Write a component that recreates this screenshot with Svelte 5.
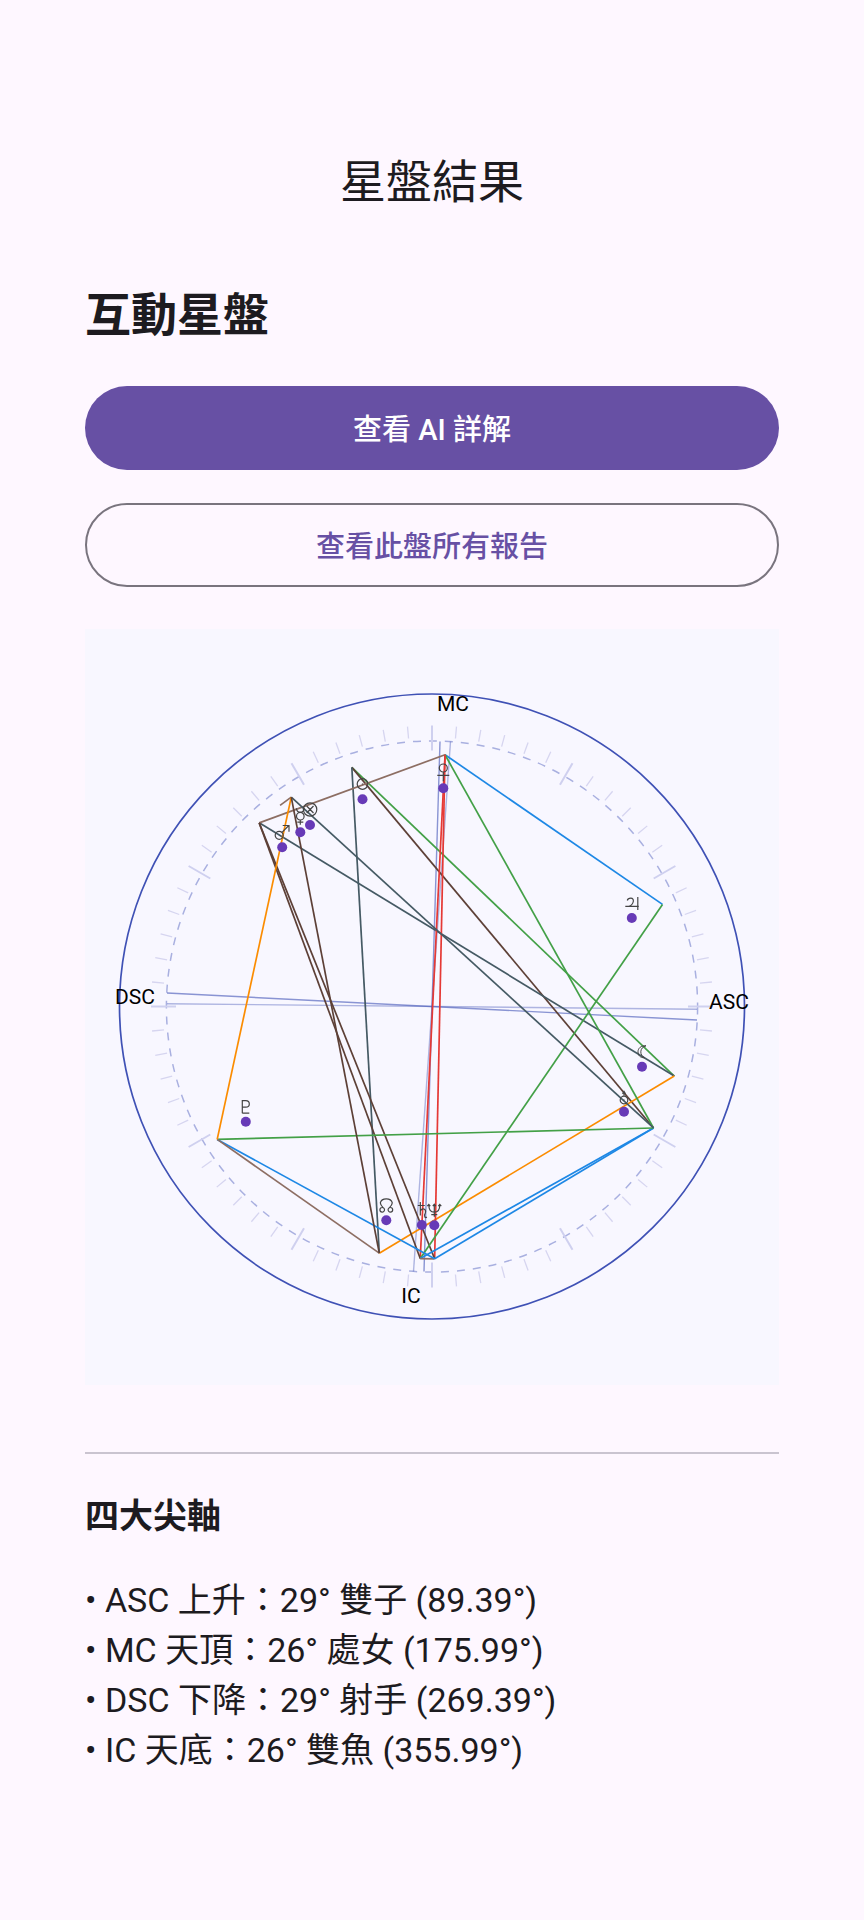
<script>
  const OUTER = 312.5;
  const INNER = 265.6;
  const VERTEX_SCALE = 252.3 / 218.7;

  const planets = {
    sun: { name: '太陽', x: -69.5, y: -207.3 },
    moon: { name: '月亮', x: 210, y: 60.3 },
    mercury: { name: '水星', x: -131.7, y: -174.3 },
    venus: { name: '金星', x: 11.3, y: -218.2 },
    mars: { name: '火星', x: -149.8, y: -159.2 },
    jupiter: { name: '木星', x: 199.8, y: -88.5 },
    saturn: { name: '土星', x: -10.2, y: 218.5 },
    uranus: { name: '天王星', x: 192, y: 105.3 },
    neptune: { name: '海王星', x: 2.3, y: 218.7 },
    pluto: { name: '冥王星', x: -186.2, y: 115.2 },
    node: { name: '北交點', x: -45.7, y: 213.8 },
    fortune: { name: '福點', x: -122, y: -181.5 }
  };

  // Glyph strokes, drawn relative to each planet's dot.
  const glyphs = {
    sun: 'M5.3-15.2A5.3 5.3 0 1 1-5.3-15.2A5.3 5.3 0 1 1 5.3-15.2M-.6-15.2H.6',
    moon: 'M4-21C-1-21.500-4-18.500-4-15C-4-11.500-2-9 2.500-9C0-10.500-1.200-12.500-1.200-15C-1.200-18 1-20.200 4-21Z',
    mercury: 'M-4-24Q-3.500-20 0-20Q3.500-20 4-24M3.800-16A3.800 3.800 0 1 1-3.800-16A3.800 3.800 0 1 1 3.800-16M0-12V-7.500M-3-10H3',
    venus: 'M4-20.300A4 4 0 1 1-4-20.300A4 4 0 1 1 4-20.300M0-16.300V-7M-6-13H6',
    mars: 'M1-12A4 4 0 1 1-7-12A4 4 0 1 1 1-12M-.2-15L6.600-21.800M.5-21.800H6.800V-15.500',
    jupiter: 'M6-21V-8M-6.500-11.700H7M-4.500-17.500Q-4-19.800-1-19.800Q2-19.800 1.500-16.500Q.8-13-3-11.700',
    saturn: 'M-4-19.500H3M-1.500-23V-9.500M-1.500-14Q0-16.500 2.200-16Q4.500-15 3.500-12Q2-9.500 3-8Q4-7 5-8',
    uranus: 'M3.800-11.800A3.800 3.800 0 1 1-3.800-11.800A3.800 3.800 0 1 1 3.800-11.800M-.6-11.800H.6M0-15.600V-20.500M-1.500-18L0-20.500L1.500-18',
    neptune: 'M-5.500-20.500Q-5.500-13 0-13Q5.500-13 5.500-20.500M0-21V-8.500M-3-10.500H3M-7-19L-5.500-20.700L-4-19M4-19L5.500-20.700L7-19M-1.500-19L0-21L1.500-19',
    pluto: 'M-3.500-8.500V-21H0Q3.500-21 3.500-17.700Q3.500-14.500 0-14.500H-3.500M-3.500-8.500H3.500',
    node: 'M-1.800-10.500A2.300 2.300 0 1 1-6.400-10.500A2.300 2.300 0 1 1-1.800-10.500M6.400-10.500A2.300 2.300 0 1 1 1.800-10.500A2.300 2.300 0 1 1 6.400-10.500M-3-12.500Q-6-15.500-6-17.500Q-5-21.500 0-21.500Q5-21.500 6-17.500Q6-15.500 3-12.500',
    fortune: 'M6.800-15.500A6.700 6.700 0 1 1-6.600-15.500A6.700 6.700 0 1 1 6.800-15.500M-3.300-19L3.500-12M3.500-19L-3.300-12'
  };

  const colors = {
    conjunction: '#8d6e63',
    semisextile: '#fb8c00',
    trine: '#43a047',
    sextile: '#1e88e5',
    quincunx: '#5d4037',
    minor: '#455a64',
    opposition: '#e53935'
  };

  const aspects = [
    ['sun', 'moon', 'trine'],
    ['sun', 'uranus', 'quincunx'],
    ['sun', 'node', 'minor'],
    ['mars', 'moon', 'minor'],
    ['moon', 'node', 'semisextile'],
    ['mercury', 'fortune', 'conjunction'],
    ['mars', 'venus', 'conjunction'],
    ['venus', 'jupiter', 'sextile'],
    ['venus', 'saturn', 'opposition'],
    ['venus', 'uranus', 'trine'],
    ['venus', 'neptune', 'opposition'],
    ['mars', 'saturn', 'quincunx'],
    ['mars', 'neptune', 'quincunx'],
    ['jupiter', 'saturn', 'trine'],
    ['uranus', 'saturn', 'sextile'],
    ['saturn', 'neptune', 'conjunction'],
    ['uranus', 'neptune', 'sextile'],
    ['uranus', 'pluto', 'trine'],
    ['fortune', 'uranus', 'minor'],
    ['neptune', 'pluto', 'sextile'],
    ['pluto', 'node', 'conjunction'],
    ['fortune', 'pluto', 'semisextile'],
    ['fortune', 'node', 'quincunx']
  ].map(([a, b, kind]) => ({
    x1: planets[a].x * VERTEX_SCALE,
    y1: planets[a].y * VERTEX_SCALE,
    x2: planets[b].x * VERTEX_SCALE,
    y2: planets[b].y * VERTEX_SCALE,
    color: colors[kind]
  }));

  const ticks = Array.from({ length: 72 }, (_, i) => {
    const angle = (i * 5 * Math.PI) / 180;
    const major = i % 6 === 0;
    const from = major ? 256 : 269;
    return {
      major,
      x1: Math.cos(angle) * from,
      y1: Math.sin(angle) * from,
      x2: Math.cos(angle) * 281,
      y2: Math.sin(angle) * 281
    };
  });

  const angles = [
    { code: 'ASC', name: '上升', sign: '29° 雙子', degree: '89.39°' },
    { code: 'MC', name: '天頂', sign: '26° 處女', degree: '175.99°' },
    { code: 'DSC', name: '下降', sign: '29° 射手', degree: '269.39°' },
    { code: 'IC', name: '天底', sign: '26° 雙魚', degree: '355.99°' }
  ];
</script>

<div class="page" lang="zh-Hant">
  <header><h1>星盤結果</h1></header>
  <main>
    <h2>互動星盤</h2>
    <div class="actions">
      <button class="filled" type="button">查看 AI 詳解</button>
      <button class="outlined" type="button">查看此盤所有報告</button>
    </div>

    <div class="chart">
      <svg viewBox="-347 -377.5 694 756" role="img" aria-label="星盤">
        <circle class="outer" r={OUTER} />
        <circle class="inner" r={INNER} />
        {#each ticks as t}
          <line class="tick" class:major={t.major} x1={t.x1} y1={t.y1} x2={t.x2} y2={t.y2} />
        {/each}
        <g class="axes">
          <line x1="-265" y1="-13.500" x2="265" y2="13.500" />
          <line x1="8" y1="-265" x2="-8" y2="265" />
          <line class="faint" x1="-265" y1="-2.800" x2="265" y2="2.800" />
          <line class="faint" x1="18.500" y1="-265" x2="-18.500" y2="265" />
        </g>
        <g class="aspects">
          {#each aspects as a}
            <line x1={a.x1} y1={a.y1} x2={a.x2} y2={a.y2} stroke={a.color} />
          {/each}
        </g>
        {#each Object.entries(planets) as [id, p]}
          <g transform="translate({p.x} {p.y})" role="img" aria-label={p.name}>
            <circle class="dot" r="5" />
            <path class="glyph" class:thin={id === 'moon'} d={glyphs[id]} />
          </g>
        {/each}
        <g class="labels">
          <text x="297" y="2">ASC</text>
          <text x="21" y="-296">MC</text>
          <text x="-297" y="-3">DSC</text>
          <text x="-21" y="296">IC</text>
        </g>
      </svg>
    </div>

    <hr />

    <section>
      <h3>四大尖軸</h3>
      <ul>
        {#each angles as a}
          <li>• {a.code} {a.name}：{a.sign} ({a.degree})</li>
        {/each}
      </ul>
    </section>
  </main>
</div>

<style>
  :global(body) {
    background: #fef7ff;
  }
  .page {
    box-sizing: border-box;
    min-height: 100vh;
    padding: 150px 85px 96px;
    color: #1d1b20;
    font-family: Roboto, 'Noto Sans CJK TC', sans-serif;
  }
  h1, h2, h3, ul {
    margin: 0;
    padding: 0;
  }
  h1 {
    font-size: 46px;
    line-height: 64px;
    font-weight: 400;
    text-align: center;
  }
  h2 {
    margin-top: 69px;
    font-size: 46px;
    line-height: 64px;
    font-weight: 700;
  }
  .actions {
    display: flex;
    flex-direction: column;
    gap: 33px;
    margin-top: 39px;
  }
  button {
    box-sizing: border-box;
    height: 84px;
    padding: 4px 24px 0;
    border: 0;
    border-radius: 42px;
    font: 500 29px/40px Roboto, 'Noto Sans CJK TC', sans-serif;
    cursor: pointer;
  }
  .filled {
    background: #6750a4;
    color: #fff;
  }
  .outlined {
    border: 2px solid #79747e;
    background: transparent;
    color: #6750a4;
  }
  .chart {
    margin-top: 42px;
    background: #f8f7ff;
  }
  svg {
    display: block;
    width: 100%;
    height: auto;
    fill: none;
  }
  .outer {
    stroke: #3f51b5;
    stroke-width: 1.7;
  }
  .inner {
    stroke: #a9b0e0;
    stroke-width: 1.5;
    stroke-dasharray: 8 8;
  }
  .tick {
    stroke: #d6d5f0;
    stroke-width: 1.3;
  }
  .major {
    stroke: #cfd0ef;
    stroke-width: 2;
  }
  .axes {
    stroke: #3f51b5;
    stroke-opacity: 0.6;
    stroke-width: 1.4;
  }
  .faint {
    stroke-opacity: 0.4;
  }
  .aspects {
    stroke-width: 1.7;
  }
  .dot {
    fill: #673ab7;
  }
  .glyph {
    stroke: #444;
    stroke-width: 1.2;
  }
  .thin {
    stroke-width: 1;
  }
  .labels {
    fill: #000;
    font-size: 21px;
    text-anchor: middle;
  }
  hr {
    height: 2px;
    margin: 67px 0 0;
    border: 0;
    background: #cac4d0;
  }
  h3 {
    margin-top: 37px;
    font-size: 34px;
    line-height: 50px;
    font-weight: 700;
  }
  ul {
    margin-top: 34px;
    list-style: none;
  }
  li {
    font-size: 34px;
    line-height: 50px;
  }
</style>
